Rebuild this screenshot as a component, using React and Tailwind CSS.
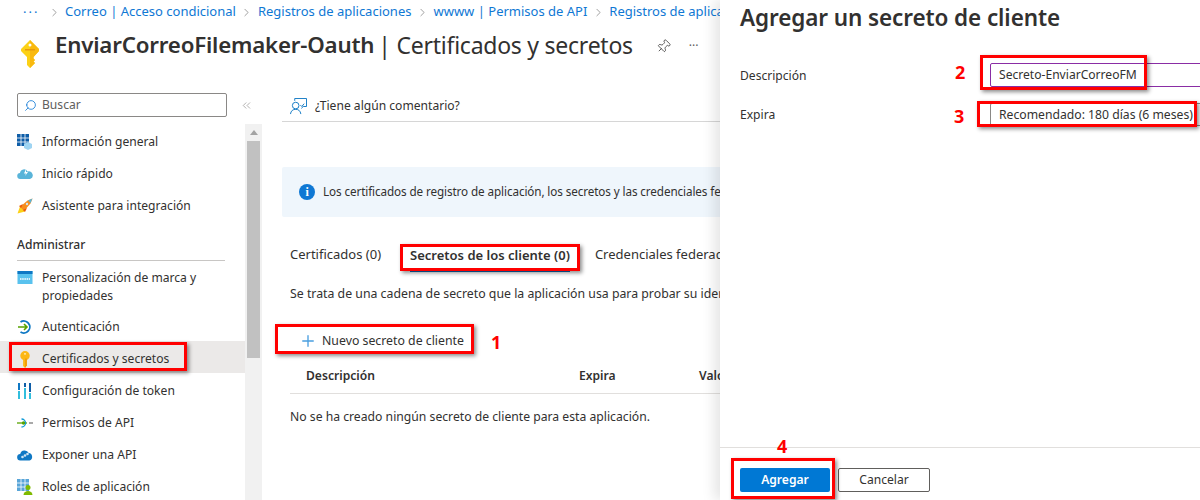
import { ChevronRight, ChevronsLeft, Search, Pin, Plus } from 'lucide-react';

function KeyIcon({ className }) {
  return (
    <svg viewBox="0 0 18 28" className={className}>
      <path d="M9 0 L18 9 L18 11 L12.500 17 L12.500 18.500 L14 20 L12.500 21.500 L14 23 L12.500 24.500 L9 28 L6 25 L6 17 L0 11 L0 9 Z" fill="#fcd116" />
      <path d="M9 0 L18 9 L18 11 L12.500 17 L12.500 18.500 L14 20 L12.500 21.500 L14 23 L12.500 24.500 L9 28 Z" fill="#f9b90f" />
      <circle cx="9" cy="5" r="1.500" fill="#fff" />
      <rect x="4" y="9" width="10" height="1.500" fill="#e89a0c" />
    </svg>
  );
}

function NavKeyIcon() {
  return (
    <svg viewBox="0 0 12 18" className="w-[12px] h-[17px] ml-[2px]">
      <circle cx="6" cy="5" r="5" fill="#fcb714" />
      <path d="M4 8h4v7l-2 3-2-2z" fill="#fcb714" />
      <circle cx="6" cy="3" r="1" fill="#fff3c4" />
      <path d="M6 8h2v7l-2 3z" fill="#f29d0a" />
    </svg>
  );
}

function GridIcon() {
  return (
    <svg viewBox="0 0 16 16" className="w-4 h-4">
      <rect x="0" y="0" width="12" height="12" fill="#0f5ea8" />
      <path d="M4 0v12M8 0v12M0 4h12M0 8h12" stroke="#fff" strokeWidth="0.800" />
      <path d="M11 8l4 2v4l-4 2-4-2v-4z" fill="#9fd4f2" />
    </svg>
  );
}

function CloudBoltIcon() {
  return (
    <svg viewBox="0 0 16 16" className="w-4 h-4">
      <path d="M3.500 13a3 3 0 0 1-.500-6 4 4 0 0 1 7.500-1.500 3.500 3.500 0 0 1 2.500 7.500z" fill="#59b4d9" />
      <path d="M9 3L7 7.500h2L8 10l3-4H9z" fill="#fff" />
    </svg>
  );
}

function RocketIcon() {
  return (
    <svg viewBox="0 0 16 16" className="w-4 h-4">
      <path d="M0.500 15.500l2.500-7 5 5z" fill="#fcd116" />
      <path d="M3 9L10.500 2.500 15.500 0.500 13.500 5.500 7 13z" fill="#f78d1e" />
      <path d="M11 2.500L15.500 0.500 13.500 5z" fill="#59b4d9" />
      <path d="M2 8l4-2-2 4zM8 14l2-4-4 2z" fill="#e8590c" />
      <circle cx="10" cy="6" r="1.200" fill="#c9e7f7" />
    </svg>
  );
}

function BrandIcon() {
  return (
    <svg viewBox="0 0 16 16" className="w-4 h-4">
      <rect x="0.500" y="1" width="15" height="13" fill="#59c2ee" />
      <rect x="0.500" y="1" width="15" height="3" fill="#0f78c4" />
      <path d="M3 9h10" stroke="#fff" strokeWidth="1.500" strokeDasharray="1.500 0.700" />
    </svg>
  );
}

function AuthIcon() {
  return (
    <svg viewBox="0 0 16 16" className="w-4 h-4" fill="none">
      <path d="M3.500 3a6 6 0 1 1 0 10" stroke="#0f78c4" strokeWidth="1.800" />
      <path d="M1 8h9M7 5l3 3-3 3" stroke="#57a300" strokeWidth="1.600" />
    </svg>
  );
}

function TokenIcon() {
  return (
    <svg viewBox="0 0 16 16" className="w-4 h-4">
      <rect x="1" y="0" width="2" height="7" fill="#0f78c4" />
      <rect x="1" y="8" width="2" height="8" fill="#32bedd" />
      <rect x="7" y="0" width="2" height="4" fill="#0f5ea8" />
      <rect x="7" y="5" width="2" height="11" fill="#32bedd" />
      <rect x="12" y="0" width="2" height="9" fill="#0f5ea8" />
      <rect x="12" y="10" width="2" height="6" fill="#32bedd" />
    </svg>
  );
}

function ApiIcon() {
  return (
    <svg viewBox="0 0 16 16" className="w-4 h-4" fill="none">
      <path d="M0 8h10" stroke="#57a300" strokeWidth="1.300" />
      <path d="M4.500 4a4 4 0 1 1 0 8" stroke="#0f9bd7" strokeWidth="1.300" />
      <path d="M12 8h4" stroke="#7a7a7a" strokeWidth="1.300" />
      <circle cx="6.500" cy="8" r="1.700" fill="#57a300" />
    </svg>
  );
}

function CloudIcon() {
  return (
    <svg viewBox="0 0 16 16" className="w-4 h-4">
      <path d="M3.500 13.500a3.200 3.200 0 0 1-.300-6.400 4.500 4.500 0 0 1 8.500-1 3.800 3.800 0 0 1 .800 7.400z" fill="#0f78c4" />
      <circle cx="5.500" cy="10" r="1.300" fill="#fff" opacity="0.800" />
      <circle cx="8" cy="8.500" r="1.300" fill="#fff" opacity="0.800" />
      <circle cx="10.500" cy="7" r="1.300" fill="#fff" opacity="0.800" />
    </svg>
  );
}

function RolesIcon() {
  return (
    <svg viewBox="0 0 16 16" className="w-4 h-4">
      <rect x="0" y="0" width="12" height="12" fill="#59a5d8" />
      <path d="M4 0v12M8 0v12M0 4h12M0 8h12" stroke="#fff" strokeWidth="0.800" />
      <circle cx="11" cy="8.500" r="2.500" fill="#7fba00" />
      <path d="M6.500 16a4.500 4 0 0 1 9 0z" fill="#7fba00" />
    </svg>
  );
}

function FeedbackIcon() {
  return (
    <svg viewBox="0 0 18 18" className="w-[17px] h-[17px]" fill="none" stroke="#0f78c4" strokeWidth="1">
      <circle cx="6" cy="8" r="3.500" />
      <path d="M0.500 17c.500-3.500 2.500-5 5.500-5s5 1.500 5.500 5" />
      <path d="M5 3V0.500h12.500V9H14l-2 2" />
      <path d="M11 7.500l1.500 1.500 2.500-3" />
    </svg>
  );
}

const topItems = [
  { label: 'Información general', icon: <GridIcon /> },
  { label: 'Inicio rápido', icon: <CloudBoltIcon /> },
  { label: 'Asistente para integración', icon: <RocketIcon /> },
];

const manageItems = [
  { label: 'Autenticación', icon: <AuthIcon /> },
  { label: 'Certificados y secretos', icon: <NavKeyIcon />, active: true },
  { label: 'Configuración de token', icon: <TokenIcon /> },
  { label: 'Permisos de API', icon: <ApiIcon /> },
  { label: 'Exponer una API', icon: <CloudIcon /> },
  { label: 'Roles de aplicación', icon: <RolesIcon /> },
];

function NavItem({ item }) {
  return (
    <div className={`flex items-center h-8 pt-[4px] pl-[17px] ${item.active ? 'bg-[#ebe9e8]' : ''}`}>
      <span className="w-[25px] flex shrink-0">{item.icon}</span>
      <span>{item.label}</span>
    </div>
  );
}

function Crumb({ children }) {
  return (
    <>
      <ChevronRight className="w-[13px] h-[13px] mx-[4.500px] shrink-0 text-[#707070]" strokeWidth={1.200} />
      <span className="whitespace-nowrap">{children}</span>
    </>
  );
}

function RedBox({ className }) {
  return <div className={`absolute border-[3px] border-[#ff0000] shadow-[2px_2px_4px_rgba(0,0,0,0.45)] ${className}`} />;
}

function Num({ className, children }) {
  return <div className={`absolute font-bold text-[18px] leading-none text-[#ff0000] ${className}`}>{children}</div>;
}

export default function App() {
  return (
    <div className="relative flex w-[1200px] h-[500px] overflow-hidden bg-white text-[12.100px] text-[#323130] font-['Noto_Sans',sans-serif]">
      <div className="w-[720px] shrink-0 overflow-hidden">
        <div className="flex items-center h-[24px] pl-[23px] text-[#0f78d4] text-[13px]">
          <span className="w-[20px] shrink-0 tracking-[2px] leading-none">···</span>
          <Crumb>Correo | Acceso condicional</Crumb>
          <Crumb>Registros de aplicaciones</Crumb>
          <Crumb>wwww | Permisos de API</Crumb>
          <Crumb>Registros de aplicaciones</Crumb>
        </div>
        <div className="flex items-start h-[45px] pl-[21px]">
          <KeyIcon className="w-[18px] h-[28px] mt-[16px] mr-[16px] shrink-0" />
          <span className="mt-[6px] leading-[30px] text-[22.300px] font-semibold whitespace-nowrap tracking-[-0.200px]">EnviarCorreoFilemaker-Oauth</span>
          <span className="mt-[6px] leading-[30px] text-[23px] whitespace-nowrap ml-[4px] tracking-[-0.250px]">| Certificados y secretos</span>
          <Pin className="w-[15px] h-[15px] mt-[15px] ml-[23px] rotate-45 shrink-0" strokeWidth={1.200} />
          <span className="mt-[16px] ml-[18px] text-[#605e5c] leading-none">···</span>
        </div>
        <div className="flex mt-[24px]">
          <div className="w-[262px] shrink-0">
            <div className="flex items-center h-[24px] mb-[7px] pl-[17px]">
              <div className="flex items-center w-[210px] shrink-0 h-[24px] border border-[#8a8886] rounded-[2px] pl-[6px] pt-[1px] text-[#605e5c]">
                <Search className="w-[13px] h-[13px] text-[#0f78d4] -scale-x-100 mr-[5px]" strokeWidth={1.500} />
                Buscar
              </div>
              <ChevronsLeft className="w-[13px] h-[13px] ml-[13px] text-[#8a8886]" strokeWidth={1.200} />
            </div>
            <div className="flex">
              <div className="w-[245px] shrink-0">
                {topItems.map(item => <NavItem key={item.label} item={item} />)}
                <div className="mx-[17px] mt-[14px] border-b border-[#c8c6c4] w-[208px] h-[27px] font-medium leading-[22px]">Administrar</div>
                <div className="flex pl-[17px] pt-[8px] h-[48px] leading-[18px]">
                  <span className="w-[25px] shrink-0 pt-[1px]"><BrandIcon /></span>
                  <span>Personalización de marca y<br />propiedades</span>
                </div>
                {manageItems.map(item => <NavItem key={item.label} item={item} />)}
              </div>
              <div className="w-[17px] shrink-0 bg-[#f1f1f1] px-[2px] h-[400px]">
                <div className="h-[17px] flex items-center justify-center">
                  <div className="w-0 h-0 border-x-[4px] border-x-transparent border-b-[5px] border-b-[#a3a3a3]" />
                </div>
                <div className="h-[217px] bg-[#c1c1c1]" />
              </div>
            </div>
          </div>
          <div className="flex-1 min-w-0 pl-[20px]">
            <div className="flex items-center h-[29px] pb-[2px] border-b border-[#d6d6d6]">
              <span className="ml-[8px] mr-[8px] flex"><FeedbackIcon /></span>
              ¿Tiene algún comentario?
            </div>
            <div className="flex items-center h-[50px] mt-[45px] bg-[#eff6fc] pl-[17px] rounded-l-[2px] whitespace-nowrap overflow-hidden text-[11.700px] tracking-[-0.100px]">
              <span className="flex items-center justify-center w-[16px] h-[16px] rounded-full bg-[#0f78d4] text-white font-bold text-[12px] leading-none mr-[8px] font-['Liberation_Serif',serif] shrink-0">i</span>
              Los certificados de registro de aplicación, los secretos y las credenciales federadas se pueden encontrar
            </div>
            <div className="flex items-center h-[34px] mt-[21px] pl-[8px] whitespace-nowrap text-[13px]">
              <span>Certificados (0)</span>
              <span className="ml-[29px] font-semibold border-b-2 border-[#0f6cbd] h-[34px] leading-[34px]">Secretos de los cliente (0)</span>
              <span className="ml-[25px]">Credenciales federadas (0)</span>
            </div>
            <div className="pl-[8px] mt-[13px] h-[18px] leading-[18px] whitespace-nowrap text-[12.300px]">Se trata de una cadena de secreto que la aplicación usa para probar su identidad</div>
            <div className="flex items-center h-[32px] mt-[22px] pl-[17px] text-[12.300px]">
              <Plus className="w-[18px] h-[18px] mr-[5px] text-[#4a9fe0]" strokeWidth={1.800} />
              Nuevo secreto de cliente
            </div>
            <div className="flex items-center h-[37px] pt-[3px] ml-[8px] border-b border-[#e1dfdd] font-semibold pl-[16px] whitespace-nowrap">
              <span className="w-[273px] shrink-0">Descripción</span>
              <span className="w-[120px] shrink-0">Expira</span>
              <span>Valor</span>
            </div>
            <div className="pl-[8px] mt-[14px] leading-[18px] whitespace-nowrap text-[12.200px]">No se ha creado ningún secreto de cliente para esta aplicación.</div>
          </div>
        </div>
      </div>
      <div className="relative w-[480px] shrink-0 flex flex-col bg-white shadow-[-6px_0_12px_rgba(0,0,0,0.1)]">
        <h1 className="pl-[20px] pt-[3px] h-[63px] text-[22.500px] font-semibold leading-[30px] tracking-[-0.100px]">Agregar un secreto de cliente</h1>
        <div className="flex items-center h-[24px] pl-[20px]">
          <span className="w-[250px] shrink-0 pt-[3px]">Descripción</span>
          <div className="w-[230px] shrink-0 h-[24px] border border-[#8a2da5] rounded-l-[2px] pl-[8px] leading-[22px] whitespace-nowrap">Secreto-EnviarCorreoFM</div>
        </div>
        <div className="flex items-center h-[23px] mt-[16px] pl-[20px]">
          <span className="w-[250px] shrink-0 pt-[2px]">Expira</span>
          <div className="w-[230px] shrink-0 h-[23px] border border-[#8a8886] rounded-l-[2px] pl-[8px] leading-[21px] whitespace-nowrap text-[12.200px]">Recomendado: 180 días (6 meses)</div>
        </div>
        <div className="mt-auto border-t border-[#e1dfdd] h-[53px] flex items-start gap-[8px] pl-[20px] pt-[20px]">
          <button className="w-[90px] h-[24px] rounded-[2px] bg-[#0078d4] text-white font-semibold">Agregar</button>
          <button className="w-[92px] h-[24px] rounded-[2px] border border-[#605e5c]">Cancelar</button>
        </div>
      </div>

      <RedBox className="left-[9px] top-[342px] w-[178px] h-[29px]" />
      <RedBox className="left-[400px] top-[244px] w-[180px] h-[27px]" />
      <RedBox className="left-[275px] top-[324px] w-[199px] h-[30px]" />
      <RedBox className="left-[980px] top-[55px] w-[167px] h-[35px]" />
      <RedBox className="left-[977px] top-[101px] w-[220px] h-[26px]" />
      <RedBox className="left-[731px] top-[458px] w-[104px] h-[41px]" />
      <Num className="left-[491px] top-[333px]">1</Num>
      <Num className="left-[955px] top-[63px]">2</Num>
      <Num className="left-[954px] top-[107px]">3</Num>
      <Num className="left-[777px] top-[437px]">4</Num>
    </div>
  );
}
